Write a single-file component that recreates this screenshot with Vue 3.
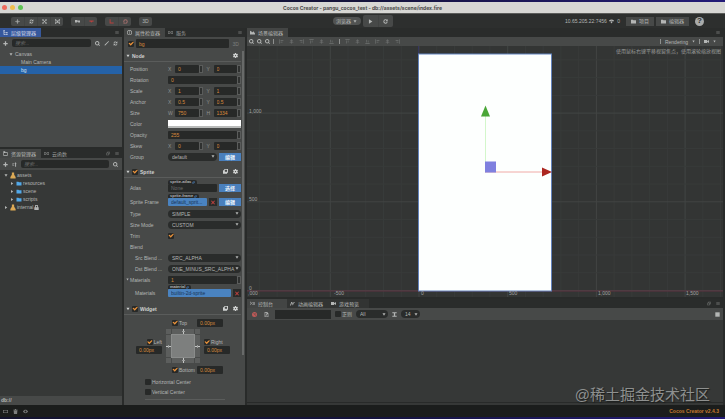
<script setup>
import { h, ref } from 'vue'

const glyphs = {
  move: 'M8 1l3 3H9v3h3V5l3 3-3 3V9H9v3h2l-3 3-3-3h2V9H4v2L1 8l3-3v2h3V4H5z',
  refresh: 'M2 7a6 6 0 0 1 10-4l2-2v6H8l2-2a4 4 0 0 0-6 2zM14 9a6 6 0 0 1-10 4l-2 2V9h6l-2 2a4 4 0 0 0 6-2z',
  scale: 'M1 1h5L4.500 3 8 6.500 11.500 3 10 1h5v5l-2-1.500L9.500 8l3.500 3.500 2-1.500v5h-5l1.500-2L8 9.500 4.500 13 6 15H1v-5l2 1.500L6.500 8 3 4.500 1 6z',
  rect: 'M0 1h4v2h8V1h4v4h-2v6h2v4h-4v-2H4v2H0v-4h2V5H0zM4 5v6h8V5zM6 6h4v4H6z',
  pivot: 'M0 3h7v2h9v6h-6V9H7v2H0z',
  caret: 'M1 5h14v3l-5 1-2 3-2-3-5-1z',
  plus: 'M6 1h4v5h5v4h-5v5H6v-5H1V6h5z',
  search: 'M7 0a7 7 0 1 1-4 12.700A7 7 0 0 1 7 0zm0 3a4 4 0 1 0 0 8 4 4 0 0 0 0-8zM11 13l2-2 3 3-2 2z',
  wand: 'M2 12L12 2l2 2L4 14H2zM12 1l3 3 1-2-2-2z',
  tree: 'M1 1h5v3H4v3h4v2H4v4h4v2H2V4H1zM9 6h6v3H9zM9 12h6v3H9z',
  menu: 'M1 2h14v2H1zM1 7h14v2H1zM1 12h14v2H1z',
  popout: 'M5 1h10v10h-4V9h2V3H7v2H5zM1 5h10v10H1zM3 7v6h6V7z',
  info: 'M8 0a8 8 0 1 1 0 16A8 8 0 0 1 8 0zm0 2a6 6 0 1 0 0 12A6 6 0 0 0 8 2zM7 4h2v2H7zM7 7h2v5H7z',
  cloud: 'M4 3h3v2H4a3 3 0 0 0 0 6h3v2H4A5 5 0 0 1 4 3zM9 3h3a5 5 0 0 1 0 10H9v-2h3a3 3 0 0 0 0-6H9zM5 7h6v2H5z',
  scene: 'M0 14V4l3-2 3 5h2l3-3 5 7v3z',
  folder: 'M0 2h6l2 2h8v10H0z',
  files: 'M1 1h6v3h8v11H1zM3 6v7h10V6z',
  sort: 'M1 3h6v2H1zM1 7h4v2H1zM1 11h6v2H1zM10 15V5H8l3-4 4 4h-2v10z',
  db: 'M5 0h6v5l1 2 3 5v4H1v-4l3-5 1-2z',
  lock: 'M3 7V4a5 5 0 0 1 10 0v3h2v9H1V7zm3 0h4V4a2 2 0 0 0-4 0z',
  play: 'M3 1l11 7-11 7z',
  reload: 'M8 1a7 7 0 1 0 7 8h-3a4 4 0 1 1-1-4L8 7h7V0l-2 2a7 7 0 0 0-5-1z',
  wifi: 'M0 5a12 12 0 0 1 16 0l-2 3a9 9 0 0 0-12 0zM4 9a6 6 0 0 1 8 0l-4 5z',
  gear: 'M6 0h4v2l2 1 2-1 2 3-2 2v2l2 2-2 3-2-1-2 1v2H6v-2l-2-1-2 1-2-3 2-2V7L0 5l2-3 2 1 2-1zM8 6a2 2 0 1 0 0 4 2 2 0 0 0 0-4z',
  book: 'M4 0h12v12h-3v3H0V4h4zM6 2v7h7V2z',
  save: 'M1 1h14v14H1z',
  down: 'M2 3h12L8 13z',
  right: 'M4 2v12l9-6z',
  close: 'M2 0l6 5 6-5 2 2-5 6 5 6-2 2-6-5-6 5-2-2 5-6-5-6z',
  ban: 'M8 0a8 8 0 1 1 0 16A8 8 0 0 1 8 0zM4 5l7 7a5 5 0 0 0-7-7zM5 4l7 7A5 5 0 0 0 5 4z',
  doc: 'M2 0h8l4 4v12H2zM4 2v12h8V6H8V2zM5 12l1-3 3-3 2 2-3 3z',
  curve: 'M0 14L4 3h3l2 6 3-6h4v2h-3l-4 9-3-8-3 8z',
  camera: 'M0 3h10v4l6-4v10l-6-4v4H0z',
  console: 'M0 2h2l4 5-4 5H0l3-5zM7 3h9v2H7zM9 7h7v2H9zM7 11h9v2H7z',
  text: 'M1 1h14v3h-5v8h5v3H1v-3h5V4H1z',
  alignL: 'M1 1h2v14H1zM5 4h9v2H5zM5 9h6v2H5z',
  alignC: 'M7 1h2v4h4v2H9v3h5v2H9v3H7v-3H2v-2h5V7H3V5h4z',
  alignR: 'M13 1h2v14h-2zM2 4h9v2H2zM5 9h6v2H5z',
  alignT: 'M1 1h14v2H1zM4 5h2v9H4zM9 5h2v6H9z',
  alignB: 'M1 13h14v2H1zM4 2h2v9H4zM9 5h2v6H9z',
  trash: 'M1 2h5V0h4v2h5v2H1zM2 5h12l-1 11H3z',
  eye: 'M0 8c4-7 12-7 16 0-4 7-12 7-16 0zm8-3a3 3 0 1 0 0 6 3 3 0 0 0 0-6z',
  box: 'M0 3h16v10H0zM2 5v6h12V5z',
  local: 'M2 1h3v10h10v3H2z',
  globe: 'M8 1a7 7 0 1 1 0 14A7 7 0 0 1 8 1zm0 3a4 4 0 1 0 0 8 4 4 0 0 0 0-8zM2 12h6v4H2z',
}

const Ico = (p) =>
  h('svg', { viewBox: '0 0 16 16', class: 'ico', 'aria-hidden': 'true' }, [
    h('path', { d: glyphs[p.n], fill: 'currentColor', 'fill-rule': 'evenodd' }),
  ])
Ico.props = ['n']

const alignTools = ['alignL', 'alignC', 'alignR', 'alignT', 'alignC', 'alignB']
const spreadTools = ['alignT', 'alignC', 'alignB', 'alignL', 'alignC', 'alignR']

const nodes = [
  { name: 'Canvas', depth: 0, open: true },
  { name: 'Main Camera', depth: 1 },
  { name: 'bg', depth: 1 },
]
const selected = ref('bg')

const assets = [
  { name: 'assets', icon: 'db', arrow: 'down', depth: 0 },
  { name: 'resources', icon: 'folder', arrow: 'right', depth: 1 },
  { name: 'scene', icon: 'folder', arrow: 'right', depth: 1 },
  { name: 'scripts', icon: 'folder', arrow: 'right', depth: 1 },
  { name: 'internal', icon: 'db', arrow: 'right', depth: 0, locked: true },
]

const nodeProps = ref([
  { label: 'Position', pair: [['X', '0'], ['Y', '0']] },
  { label: 'Rotation', value: '0' },
  { label: 'Scale', pair: [['X', '1'], ['Y', '1']] },
  { label: 'Anchor', pair: [['X', '0.5'], ['Y', '0.5']] },
  { label: 'Size', pair: [['W', '750'], ['H', '1334']] },
  { label: 'Color', color: true },
  { label: 'Opacity', value: '255' },
  { label: 'Skew', pair: [['X', '0'], ['Y', '0']] },
])

const spriteProps = [
  { label: 'Type', option: 'SIMPLE' },
  { label: 'Size Mode', option: 'CUSTOM' },
  { label: 'Trim', check: true },
  { label: 'Blend' },
  { label: 'Src Blend ...', option: 'SRC_ALPHA', sub: true },
  { label: 'Dst Blend ...', option: 'ONE_MINUS_SRC_ALPHA', sub: true },
]

// World origin sits at (172, 245) in the viewport; 500 units span 88.7 px.
const step = 88.7 / 5
const gridX = Array.from({ length: 90 }, (_, i) => i - 45).map((i) => ({ p: 172 + i * step, major: i % 5 === 0 }))
const gridY = Array.from({ length: 40 }, (_, i) => i - 20).map((i) => ({ p: 245 - i * step, major: i % 5 === 0 }))
</script>

<template>
  <div class="app">
    <header class="titlebar">
      <span class="lights"><i class="red"></i><i class="amber"></i><i class="green"></i></span>
      <h1>Cocos Creator - pangu_cocos_test - db://assets/scene/index.fire</h1>
      <span></span>
    </header>

    <div class="toolbar">
      <div class="tools">
        <div class="group">
          <button v-for="n in ['move', 'refresh', 'scale', 'rect']" :key="n"><Ico :n="n" /></button>
        </div>
        <div class="group">
          <button><Ico n="pivot" /></button>
          <button class="danger"><Ico n="caret" /></button>
        </div>
        <div class="group">
          <button class="danger"><Ico n="local" /></button>
          <button class="danger soft"><Ico n="globe" /></button>
        </div>
        <div class="group"><button>3D</button></div>
      </div>
      <div class="run">
        <button class="pill">浏览器 <Ico n="down" /></button>
        <div class="group play">
          <button><Ico n="play" /></button>
          <button><Ico n="reload" /></button>
        </div>
      </div>
      <div class="links">
        <span class="addr">10.65.205.22:7456 <Ico n="wifi" /> &nbsp;0</span>
        <button class="open"><Ico n="folder" />项目</button>
        <button class="open"><Ico n="folder" />编辑器</button>
        <button class="help">?</button>
      </div>
    </div>

    <main class="dock">
      <div class="column">
        <section class="panel hierarchy">
          <nav class="tabs">
            <button class="tab focus"><Ico n="tree" />层级管理器</button>
            <span class="tab-tools"><Ico n="menu" /></span>
          </nav>
          <div class="searchbar">
            <Ico n="plus" />
            <input type="text" placeholder="搜索..." />
            <Ico n="search" /><Ico n="wand" /><Ico n="refresh" />
          </div>
          <ul class="tree">
            <li
              v-for="n in nodes"
              :key="n.name"
              :class="['d' + n.depth, { selected: n.name === selected }]"
              @click="selected = n.name"
            >
              <span class="twist"><Ico v-if="n.open" n="down" /></span>{{ n.name }}
            </li>
          </ul>
        </section>

        <section class="panel assets">
          <nav class="tabs">
            <button class="tab active"><Ico n="files" />资源管理器</button>
            <button class="tab"><Ico n="cloud" />云函数</button>
            <span class="tab-tools"><Ico n="popout" /><Ico n="menu" /></span>
          </nav>
          <div class="searchbar">
            <Ico n="plus" /><Ico n="sort" />
            <input type="text" placeholder="搜索..." />
            <Ico n="search" />
          </div>
          <ul class="tree files">
            <li v-for="a in assets" :key="a.name" :class="'d' + a.depth">
              <span class="twist"><Ico :n="a.arrow" /></span>
              <span :class="a.icon"><Ico :n="a.icon" /></span>{{ a.name }}
              <Ico v-if="a.locked" n="lock" />
            </li>
          </ul>
          <div class="path">db://</div>
        </section>
      </div>

      <section class="panel inspector">
        <nav class="tabs">
          <button class="tab active"><Ico n="info" />属性检查器</button>
          <button class="tab"><Ico n="cloud" />服务</button>
          <span class="tab-tools"><Ico n="menu" /></span>
        </nav>
        <div class="name-row">
          <input type="checkbox" checked aria-label="bg" />
          <input class="field" type="text" value="bg" aria-label="bg" />
          <span class="threed">3D</span>
        </div>
        <div class="scroller">
          <div class="sections">
            <div class="head"><Ico n="down" /><b>Node</b><span class="acts"><Ico n="gear" /></span></div>
            <div v-for="p in nodeProps" :key="p.label" class="prop">
              <span class="label">{{ p.label }}</span>
              <div class="control">
                <template v-if="p.pair">
                  <label v-for="a in p.pair" :key="a[0]" class="axis">
                    <span>{{ a[0] }}</span>
                    <input v-model="a[1]" class="field" type="text" />
                    <i class="spin"></i>
                  </label>
                </template>
                <label v-else-if="p.value" class="axis">
                  <input v-model="p.value" class="field" type="text" :aria-label="p.label" />
                  <i class="spin"></i>
                </label>
                <button v-else class="swatch" :aria-label="p.label"></button>
              </div>
            </div>
            <div class="prop">
              <label class="label" for="group">Group</label>
              <div class="control">
                <span class="select"><select id="group"><option>default</option></select><Ico n="down" /></span>
                <button class="blue">编辑</button>
              </div>
            </div>

            <div class="head">
              <Ico n="down" /><input id="sprite" type="checkbox" checked /><label for="sprite"><b>Sprite</b></label>
              <span class="acts"><Ico n="book" /><Ico n="gear" /></span>
            </div>
            <div class="prop asset">
              <label class="label" for="atlas">Atlas</label>
              <div class="control">
                <span class="slot"><small>sprite-atlas <Ico n="popout" /></small><input id="atlas" class="field none" type="text" value="None" /></span>
                <button class="blue">选择</button>
              </div>
            </div>
            <div class="prop asset">
              <label class="label" for="frame">Sprite Frame</label>
              <div class="control">
                <span class="slot"><small>sprite-frame <Ico n="popout" /></small><input id="frame" class="field filled" type="text" value="default_sprit..." /></span>
                <button class="remove"><Ico n="close" /></button>
                <button class="blue">编辑</button>
              </div>
            </div>
            <div v-for="p in spriteProps" :key="p.label" class="prop" :class="{ sub: p.sub }">
              <label class="label" :for="p.label">{{ p.label }}</label>
              <div class="control">
                <span v-if="p.option" class="select"><select :id="p.label"><option>{{ p.option }}</option></select><Ico n="down" /></span>
                <input v-else-if="p.check" :id="p.label" type="checkbox" checked />
              </div>
            </div>
            <div class="prop fold">
              <label class="label" for="count"><Ico n="down" />Materials</label>
              <div class="control">
                <span class="axis"><input id="count" class="field" type="text" value="1" /><i class="spin"></i></span>
              </div>
            </div>
            <div class="prop asset sub">
              <label class="label" for="mat">Materials</label>
              <div class="control">
                <span class="slot"><small>material <Ico n="popout" /></small><input id="mat" class="field filled" type="text" value="builtin-2d-sprite" /></span>
                <button class="remove"><Ico n="close" /></button>
              </div>
            </div>

            <div class="head">
              <Ico n="down" /><input id="widget" type="checkbox" checked /><label for="widget"><b>Widget</b></label>
              <span class="acts"><Ico n="book" /><Ico n="gear" /></span>
            </div>
            <div class="widget">
              <div class="edge">
                <label><input type="checkbox" checked />Top</label>
                <input class="field" type="text" value="0.00px" aria-label="Top" />
              </div>
              <div class="middle">
                <div class="side end">
                  <label><input type="checkbox" checked />Left</label>
                  <input class="field" type="text" value="0.00px" aria-label="Left" />
                </div>
                <svg class="frame" viewBox="0 0 34 34" aria-hidden="true">
                  <rect width="34" height="34" fill="#5c5e5d" />
                  <path d="M5.500 0v34M28.500 0v34M0 5.500h34M0 28.500h34" stroke="#484a49" />
                  <rect x="5.500" y="5.500" width="23" height="23" fill="#7d7f7e" stroke="#8a8c8b" />
                  <path d="M17.500 0v5M17.500 29v5M0 17.500h5M29 17.500h5" stroke="#c4c6c5" />
                  <path d="M16 2.500h3M16 31.500h3M2.500 16v3M31.500 16v3" stroke="#9c9e9d" />
                </svg>
                <div class="side">
                  <label><input type="checkbox" checked />Right</label>
                  <input class="field" type="text" value="0.00px" aria-label="Right" />
                </div>
              </div>
              <div class="edge">
                <label><input type="checkbox" checked />Bottom</label>
                <input class="field" type="text" value="0.00px" aria-label="Bottom" />
              </div>
              <label class="center"><input type="checkbox" />Horizontal Center</label>
              <label class="center"><input type="checkbox" />Vertical Center</label>
              <hr />
            </div>
          </div>
          <div class="track"><i></i></div>
        </div>
      </section>

      <div class="column">
        <section class="panel scene">
          <nav class="tabs">
            <button class="tab active"><Ico n="scene" />场景编辑器</button>
            <span class="tab-tools"><Ico n="menu" /></span>
          </nav>
          <div class="scene-tools">
            <span class="zooms"><Ico n="search" /><Ico n="search" /><Ico n="search" /></span><i class="bar"></i>
            <span class="aligns"><Ico v-for="(n, i) in alignTools" :key="i" :n="n" /></span><i class="bar"></i>
            <span class="aligns"><Ico v-for="(n, i) in spreadTools" :key="i" :n="n" /></span>
            <span class="view"><i class="bar"></i>Rendering<Ico n="down" /><i class="bar"></i><Ico n="camera" /><Ico n="down" /></span>
          </div>
          <div class="viewport">
            <svg viewBox="0 0 476 252" preserveAspectRatio="xMidYMid slice">
              <g stroke="#383b3a">
                <line v-for="g in gridX" :key="'x' + g.p" :x1="g.p" :x2="g.p" y1="-100" y2="400" :class="{ major: g.major }" />
                <line v-for="g in gridY" :key="'y' + g.p" :y1="g.p" :y2="g.p" x1="-400" x2="900" :class="{ major: g.major }" />
              </g>
              <path d="M-400 245.500H900" stroke="#5f3340" />
              <path d="M171.500 -100V245" stroke="#35365f" />
              <rect x="171.500" y="8.500" width="133" height="237" fill="#fdfffe" stroke="#6383bd" />
              <g class="ruler">
                <text x="2" y="67">1,000</text>
                <text x="2" y="155">500</text>
                <text x="2" y="244">0</text>
                <text x="1" y="249">,000</text>
                <text x="87" y="249">-500</text>
                <text x="174" y="249">0</text>
                <text x="262" y="249">500</text>
                <text x="351" y="249">1,000</text>
                <text x="439" y="249">1,500</text>
              </g>
              <path d="M238.500 127V70" stroke="#d3f7cb" />
              <path d="M238 126.500H295" stroke="#f0aaa6" />
              <path d="M238.500 60L243 71H234z" fill="#4aa637" />
              <path d="M305 126.500L295 122V131z" fill="#ac2720" />
              <rect x="238" y="116" width="11" height="11" fill="#7f80df" />
            </svg>
            <p class="hint">使用鼠标右键平移视窗焦点，使用滚轮缩放视图</p>
          </div>
        </section>

        <section class="panel console">
          <nav class="tabs">
            <button class="tab active wide"><Ico n="console" />控制台</button>
            <button class="tab idle"><Ico n="curve" />动画编辑器</button>
            <button class="tab idle last"><Ico n="camera" />游戏预览</button>
            <span class="tab-tools"><Ico n="popout" /><Ico n="menu" /></span>
          </nav>
          <div class="log-tools">
            <button class="clear"><Ico n="ban" /></button>
            <button class="mark"><Ico n="doc" /></button>
            <input class="filter" type="text" aria-label="正则" />
            <label><input type="checkbox" />正则</label>
            <span class="select level"><select aria-label="All"><option>All</option></select><Ico n="down" /></span>
            <Ico n="text" />
            <span class="select size"><select aria-label="14"><option>14</option></select><Ico n="down" /></span>
            <button class="copy"><Ico n="save" /></button>
          </div>
          <div class="log"></div>
        </section>
      </div>
    </main>

    <footer class="status">
      <Ico n="box" /><Ico n="trash" /><Ico n="eye" />
      <span>Cocos Creator v2.4.3</span>
    </footer>
    <div class="watermark">@稀土掘金技术社区</div>
  </div>
</template>

<style>
body {
  background: #1b1d1c;
}
</style>

<style scoped>
.app,
.app * {
  box-sizing: border-box;
}
.app {
  position: relative;
  display: flex;
  flex-direction: column;
  min-height: 100vh;
  padding: 2px 0;
  background: linear-gradient(90deg, #14142f, #15143c 50%, #231b78);
  color: #b4b6b5;
  font: 5px/8px "Liberation Sans", "Noto Sans CJK SC", sans-serif;
}
button,
input,
select {
  margin: 0;
  padding: 0;
  border: 0;
  border-radius: 0;
  background: none;
  color: inherit;
  font: inherit;
  appearance: none;
  outline: 0;
  min-width: 0;
}
button {
  display: flex;
  align-items: center;
  justify-content: center;
}
.ico {
  width: 5px;
  height: 5px;
  flex: none;
  display: block;
}
.titlebar {
  display: grid;
  grid-template-columns: 1fr auto 1fr;
  align-items: center;
  height: 12px;
  background: #d7d7d4;
  border-bottom: 1px solid #5b5c5a;
  color: #4a4a49;
}
.titlebar h1 {
  margin: 0;
  font: bold 5px/8px Inter, "Liberation Sans", sans-serif;
}
.lights {
  display: flex;
  gap: 3px;
  padding-left: 2px;
}
.lights i {
  width: 5px;
  height: 5px;
  border-radius: 50%;
}
.red { background: #ee6a5f; }
.amber { background: #f0bd4f; }
.green { background: #5fc454; }

.toolbar {
  display: grid;
  grid-template-columns: 1fr auto 1fr;
  align-items: center;
  height: 14px;
  background: #2d2f2e;
}
.tools,
.run,
.links {
  display: flex;
  align-items: center;
}
.tools {
  gap: 8px;
  padding-left: 11px;
}
.run {
  gap: 2px;
}
.links {
  justify-content: flex-end;
  gap: 2px;
  padding-right: 21px;
}
.group {
  display: flex;
  border-radius: 2px;
  background: #474948;
}
.group button {
  width: 13px;
  height: 9px;
}
.group button + button {
  border-left: 1px solid #414342;
}
.play button {
  width: 15px;
  height: 12px;
}
.danger {
  color: #b8403d;
}
.soft {
  color: #a8706e;
}
.pill {
  gap: 2px;
  width: 28px;
  height: 8px;
  border-radius: 4px;
  background: #515352;
}
.pill .ico {
  width: 4px;
}
.addr {
  display: flex;
  align-items: center;
  gap: 2px;
  margin-right: 4px;
}
.open {
  gap: 3px;
  height: 9px;
  padding: 0 5px;
  background: #474948;
}
.help {
  width: 9px;
  height: 9px;
  margin-left: 4px;
  border-radius: 50%;
  background: #a9abaa;
  color: #2d2f2e;
  font-weight: bold;
  font-size: 8px;
}

.dock {
  flex: 1;
  display: grid;
  grid-template-columns: minmax(0, 122fr) minmax(0, 121fr) minmax(0, 476fr);
  gap: 2px;
  padding-right: 2px;
  background: #292b2a;
}
.column {
  display: flex;
  flex-direction: column;
  gap: 2px;
}
.panel {
  display: flex;
  flex-direction: column;
  min-height: 0;
  background: #474948;
}
.hierarchy { flex: 119 1 0; }
.assets { flex: 256 1 0; }
.scene { flex: 269 1 0; }
.console { flex: 106 1 0; }
.assets,
.console,
.scene {
  background: #363837;
}
.tabs {
  display: flex;
  height: 9px;
  flex: none;
  background: #2a2c2b;
  color: #9a9c9b;
}
.tab {
  gap: 3px;
  padding: 0 5px 0 3px;
}
.tab.active {
  background: #434544;
  color: #b4b6b5;
}
.tab.focus {
  background: #36589c;
  color: #d5dae6;
}
.tab.idle {
  background: #323433;
  color: #b4b6b5;
}
.tab.last {
  padding-right: 10px;
}
.tab.wide {
  padding-right: 14px;
}
.tab-tools {
  display: flex;
  align-items: center;
  gap: 5px;
  margin-left: auto;
  padding-right: 3px;
  color: #6f7170;
}
.tab-tools .ico {
  width: 4px;
}
.searchbar {
  display: flex;
  align-items: center;
  gap: 4px;
  height: 12px;
  flex: none;
  padding: 0 4px 0 3px;
  background: #474948;
}
.searchbar input {
  flex: 1;
  height: 8px;
  padding-left: 3px;
  border-radius: 2px;
  background: #272928;
}
.searchbar input::placeholder {
  color: #686a69;
  font-style: italic;
  opacity: 1;
}
.tree {
  flex: 1;
  margin: 0;
  padding: 1px 0 0;
  list-style: none;
}
.tree li {
  display: flex;
  align-items: center;
  gap: 1px;
  height: 8px;
  padding-left: 9px;
}
.tree li.d1 {
  padding-left: 15px;
}
.files li {
  padding-left: 4px;
}
.files li.d1 {
  padding-left: 10px;
}
.twist {
  width: 5px;
}
.twist .ico {
  width: 4px;
}
.tree .selected {
  background: #2562a8;
  color: #d5e2f2;
}
.folder {
  color: #52a9ea;
}
.folder .ico {
  width: 6px;
}
.db {
  color: #dca955;
}
.db .ico {
  width: 6px;
  height: 7px;
}
.path {
  height: 9px;
  padding-left: 1px;
  background: #474948;
  font-weight: bold;
}

.name-row {
  display: flex;
  align-items: center;
  gap: 2px;
  height: 13px;
  flex: none;
  padding: 0 6px 0 4px;
}
.name-row .field {
  flex: 1;
  height: 9px;
}
.threed {
  padding-left: 2px;
  color: #7d7f7e;
}
input[type="checkbox"] {
  width: 6px;
  height: 6px;
  flex: none;
  border-radius: 1px;
  background: #272928;
}
input[type="checkbox"]:checked::before {
  content: "";
  display: block;
  width: 6px;
  height: 6px;
  background: #e8913a;
  clip-path: polygon(8% 45%, 25% 38%, 42% 55%, 88% 15%, 95% 32%, 45% 88%);
}
.scroller {
  flex: 1;
  display: flex;
}
.sections {
  flex: 1;
  min-width: 0;
  padding-right: 1px;
}
.track {
  width: 3px;
  padding: 1px 1px 0 0;
}
.track i {
  display: block;
  width: 2px;
  height: 86%;
  background: #686a69;
}
.head {
  display: flex;
  align-items: center;
  gap: 2px;
  height: 12px;
  margin: 4px 0 2px;
  padding: 0 3px 0 2px;
  border-bottom: 1px solid #5a5c5b;
  color: #d0d2d1;
}
.head:first-child {
  margin: 0 0 1px;
}
.head > .ico {
  width: 4px;
  height: 4px;
}
.acts {
  display: flex;
  gap: 5px;
  margin-left: auto;
}
.prop {
  display: flex;
  align-items: center;
  height: 11px;
  padding-left: 6px;
}
.label {
  width: 38px;
  flex: none;
  white-space: nowrap;
}
.sub .label {
  padding-left: 5px;
}
.fold {
  padding-left: 2px;
}
.fold .label {
  display: flex;
  align-items: center;
  gap: 1px;
  width: 42px;
}
.fold .ico {
  width: 3px;
}
.control {
  flex: 1;
  display: flex;
  align-items: center;
  gap: 2px;
  min-width: 0;
}
.axis {
  flex: 1;
  display: flex;
  align-items: center;
  min-width: 0;
}
.axis span {
  width: 7px;
  color: #909291;
}
.axis + .axis {
  padding-left: 2px;
}
.field {
  flex: 1;
  height: 8px;
  padding-left: 3px;
  border-radius: 1px;
  background: #272928;
  color: #d98a3c;
}
.spin {
  width: 4px;
  height: 8px;
  border: 1px solid #5a5c5b;
  background: #2f3130;
}
.swatch {
  flex: 1;
  height: 8px;
  background: #fff;
  border-bottom: 2px solid #b9bbba;
}
.select {
  flex: 1;
  display: grid;
  align-items: center;
  height: 8px;
  border-radius: 4px;
  background: #2a2c2b;
  min-width: 0;
}
.select select,
.select .ico {
  grid-area: 1 / 1;
}
.select select {
  height: 8px;
  padding-left: 4px;
  text-overflow: clip;
}
.select .ico {
  width: 4px;
  justify-self: end;
  margin-right: 2px;
  pointer-events: none;
}
.blue {
  width: 22px;
  height: 8px;
  flex: none;
  background: #4a80bd;
  color: #eef4fb;
  font-weight: bold;
}
.asset {
  height: 14px;
}
.asset .label {
  padding-top: 2px;
}
.asset .control {
  align-items: flex-end;
  padding-bottom: 2px;
}
.slot {
  flex: 1;
  display: flex;
  flex-direction: column;
  align-items: flex-start;
  min-width: 0;
}
.slot small {
  display: flex;
  align-items: center;
  gap: 1px;
  height: 4px;
  padding: 0 2px;
  border-radius: 2px 2px 0 0;
  background: #272928;
  font: bold 4px/4px "Liberation Sans", sans-serif;
}
.slot small .ico {
  width: 3px;
  height: 3px;
  color: #4a80bd;
}
.slot .field {
  width: 100%;
  height: 8px;
  flex: none;
}
.field.none {
  color: #6a6c6b;
}
.field.filled {
  background: #4a83c0;
  color: #183457;
}
.remove {
  width: 8px;
  height: 8px;
  background: #292b2a;
  color: #b8403d;
}
.remove .ico {
  width: 4px;
}
.widget {
  display: flex;
  flex-direction: column;
}
.widget label {
  display: flex;
  align-items: center;
  gap: 1px;
}
.edge {
  display: grid;
  grid-template-columns: 25px 26px;
  align-items: center;
  height: 11px;
  padding-left: 48px;
}
.widget .field {
  width: 26px;
  flex: none;
}
.middle {
  display: flex;
  align-items: center;
  gap: 4px;
  height: 36px;
  padding-left: 12px;
}
.frame {
  width: 34px;
  height: 34px;
}
.side {
  display: flex;
  flex-direction: column;
}
.end {
  align-items: flex-end;
}
.center {
  height: 10px;
  padding-left: 21px;
}
.edge + .center {
  margin-top: 2px;
}
.widget hr {
  width: 80px;
  margin: 2px 0 0 21px;
  border: 0;
  border-top: 1px solid #5a5c5b;
}

.scene-tools {
  display: flex;
  align-items: center;
  gap: 3px;
  height: 9px;
  flex: none;
  padding: 0 7px 0 2px;
  background: #474948;
}
.zooms {
  display: flex;
  gap: 3px;
  color: #b4b6b5;
}
.aligns {
  display: flex;
  gap: 5px;
  padding: 0 2px;
  color: #6f7170;
}
.bar {
  width: 1px;
  height: 5px;
  background: #8e908f;
}
.view {
  display: flex;
  align-items: center;
  gap: 4px;
  margin-left: auto;
}
.view .ico:nth-of-type(odd) {
  width: 3px;
}
.viewport {
  position: relative;
  flex: 1;
  min-height: 0;
  overflow: hidden;
  background: #333534;
}
.viewport svg {
  position: absolute;
  inset: 0;
  width: 100%;
  height: 100%;
}
.major {
  stroke: #424544;
}
.ruler {
  fill: #a0a2a1;
}
.hint {
  position: absolute;
  top: 1px;
  right: 2px;
  margin: 0;
  color: #9c9e9d;
}

.log-tools {
  display: flex;
  align-items: center;
  gap: 4px;
  height: 12px;
  flex: none;
  padding: 0 3px 0 4px;
  background: #474948;
}
.log-tools > button {
  width: 6px;
}
.log-tools label {
  display: flex;
  align-items: center;
  gap: 1px;
}
.clear {
  color: #c05a58;
}
.log-tools > .mark {
  width: 10px;
}
.filter {
  width: 56px;
  height: 9px;
  background: #272928;
}
.level {
  flex: none;
  width: 32px;
}
.size {
  flex: none;
  width: 19px;
}
.log-tools > .copy {
  margin-left: auto;
}
.log {
  flex: 1;
  margin-bottom: 2px;
  border-bottom: 1px solid #282a29;
}

.status {
  display: flex;
  align-items: center;
  gap: 5px;
  height: 12px;
  padding: 0 6px 0 3px;
  background: #1b1d1c;
  color: #7d7f7e;
}
.status span {
  margin-left: auto;
  color: #c57a2e;
  font-weight: bold;
}
.watermark {
  position: absolute;
  right: 15px;
  bottom: 15px;
  color: #8e908f;
  font-size: 15px;
  line-height: 18px;
  text-shadow: 1px 1px 1px #1b1d1c;
}
</style>
